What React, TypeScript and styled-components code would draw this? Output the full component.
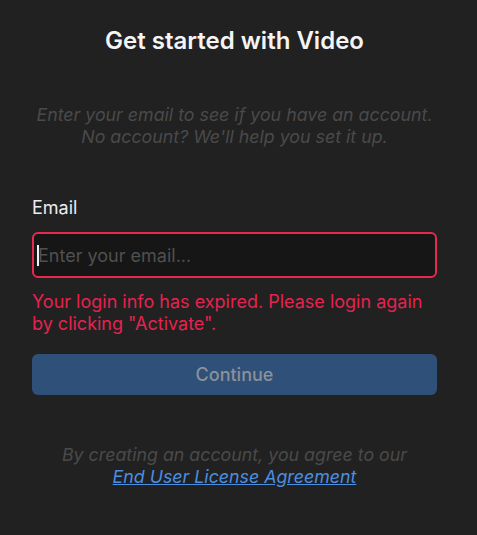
import styled, { createGlobalStyle } from 'styled-components'

const GlobalStyle = createGlobalStyle`
  html, body {
    margin: 0;
    padding: 0;
    background: #212121;
  }
  body {
    font-family: Inter, "Noto Sans", sans-serif;
  }
`

const Page = styled.div`
  width: 477px;
  height: 535px;
  box-sizing: border-box;
  padding: 26px 40px 0 32px;
  display: flex;
  flex-direction: column;
  background: #212121;
`

const Title = styled.h1`
  margin: 0;
  font-size: 24px;
  line-height: 30px;
  font-weight: 600;
  color: #f4f4f4;
  text-align: center;
`

const Hint = styled.p<{ $top: number }>`
  margin: ${({ $top }) => $top}px 0 0;
  font-size: 17.8px;
  line-height: 22px;
  font-style: italic;
  color: #4a4a4a;
  text-align: center;
`

const Label = styled.label`
  margin-top: 49px;
  font-size: 18px;
  line-height: 22px;
  color: #ececec;
`

const Field = styled.div`
  position: relative;
  margin-top: 13px;
  display: flex;
`

const Input = styled.input`
  flex: 1;
  height: 46px;
  box-sizing: border-box;
  padding: 0 4px;
  border: 2px solid #e8284f;
  border-radius: 6px;
  background: #161616;
  color: #ddd;
  font-family: inherit;
  font-size: 18px;
  outline: none;
  caret-color: transparent;

  &::placeholder {
    color: #505050;
  }
`

const Caret = styled.span`
  position: absolute;
  left: 5px;
  top: 13px;
  width: 2px;
  height: 21px;
  background: #f2f2f2;
  pointer-events: none;
`

const ErrorText = styled.p`
  margin: 13px 0 0;
  font-size: 18px;
  line-height: 22px;
  color: #e5234f;
`

const Button = styled.button`
  margin-top: 19px;
  height: 41px;
  border: none;
  border-radius: 6px;
  background: #2e5079;
  color: #8c9097;
  font-family: inherit;
  font-size: 18px;
  font-weight: 500;
`

const AgreementLink = styled.a`
  color: #4a8fe2;
  text-decoration: underline;
`

const App = () => {
  return (
    <>
      <GlobalStyle />
      <Page>
        <Title>Get started with Video</Title>
        <Hint $top={48}>
          Enter your email to see if you have an account.
          <br />
          No account? We'll help you set it up.
        </Hint>
        <Label htmlFor='email'>Email</Label>
        <Field>
          <Input id='email' type='email' placeholder='Enter your email...' />
          <Caret />
        </Field>
        <ErrorText>
          Your login info has expired. Please login again
          <br />
          by clicking "Activate".
        </ErrorText>
        <Button type='button'>Continue</Button>
        <Hint $top={49}>
          By creating an account, you agree to our
          <br />
          <AgreementLink href='#'>End User License Agreement</AgreementLink>
        </Hint>
      </Page>
    </>
  )
}

export default App
